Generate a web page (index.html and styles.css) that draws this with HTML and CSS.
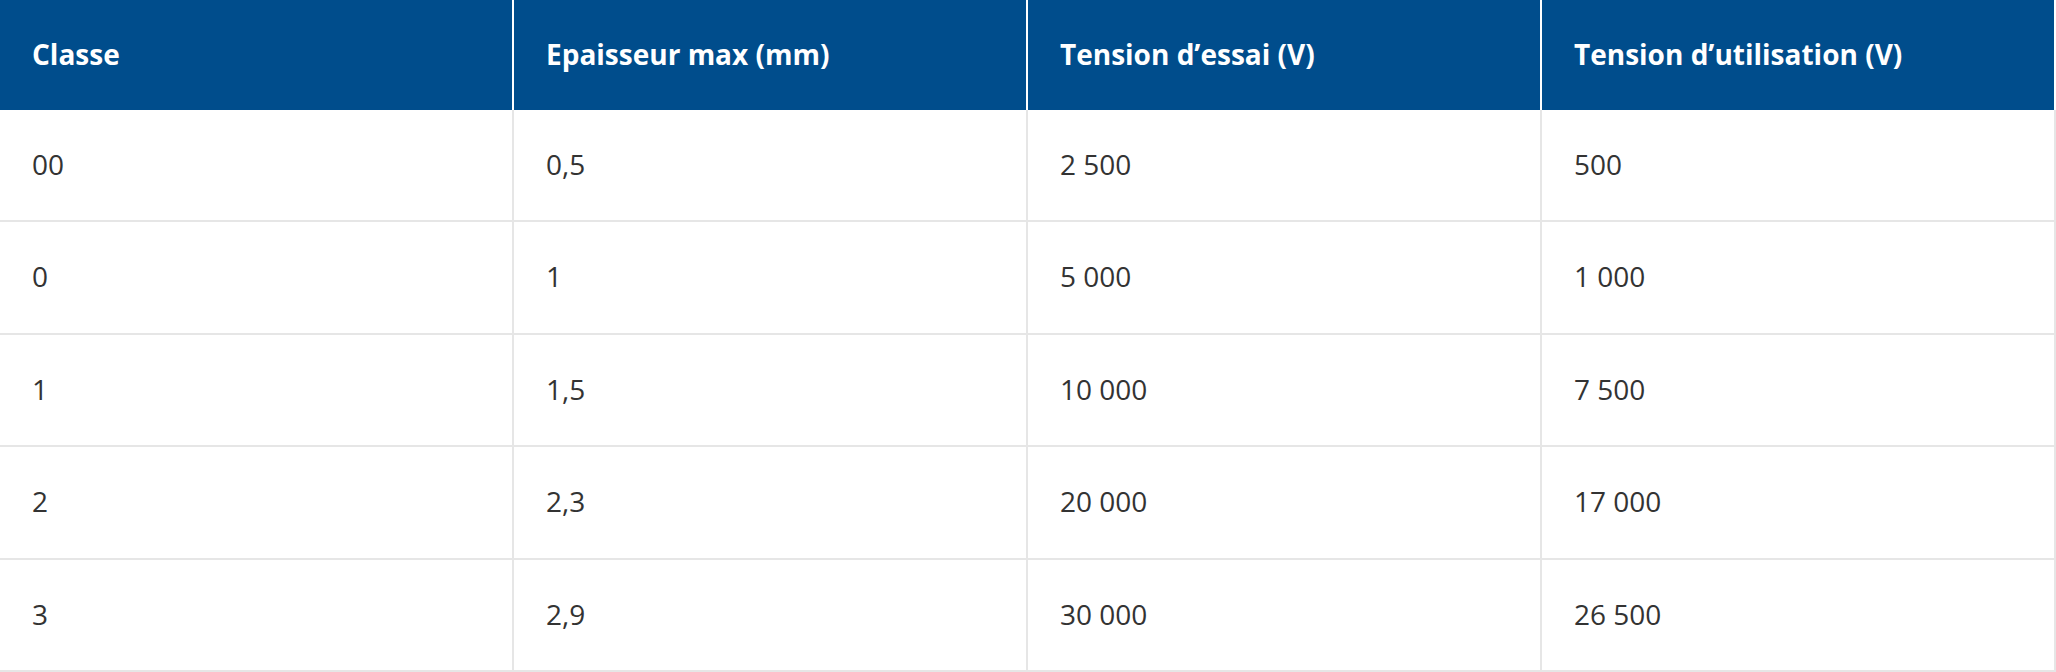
FILE: index.html
```html
<!DOCTYPE html>
<html lang="fr">
<head>
<meta charset="utf-8">
<title>Classes</title>
<link rel="stylesheet" href="styles.css">
</head>
<body>
<table class="spec-table">
  <thead>
    <tr>
      <th>Classe</th>
      <th>Epaisseur max (mm)</th>
      <th>Tension d’essai (V)</th>
      <th>Tension d’utilisation (V)</th>
    </tr>
  </thead>
  <tbody>
    <tr><td>00</td><td>0,5</td><td>2 500</td><td>500</td></tr>
    <tr><td>0</td><td>1</td><td>5 000</td><td>1 000</td></tr>
    <tr><td>1</td><td>1,5</td><td>10 000</td><td>7 500</td></tr>
    <tr><td>2</td><td>2,3</td><td>20 000</td><td>17 000</td></tr>
    <tr><td>3</td><td>2,9</td><td>30 000</td><td>26 500</td></tr>
  </tbody>
</table>
</body>
</html>
```
FILE: styles.css
```css
html, body {
  margin: 0;
  padding: 0;
  background: #ffffff;
}

body {
  font-family: "Open Sans", "Noto Sans", "Liberation Sans", sans-serif;
  color: #333333;
}

.spec-table {
  width: 2056px;
  table-layout: fixed;
  border-collapse: separate;
  border-spacing: 0;
  font-size: 28px;
}

.spec-table thead tr {
  height: 110px;
}

.spec-table tbody tr {
  height: 112.4px;
}

.spec-table th,
.spec-table td {
  text-align: left;
  vertical-align: middle;
  padding: 0 0 2px 32px;
  line-height: 1.3;
}

.spec-table th {
  background: #004d8c;
  color: #ffffff;
  font-weight: 700;
  border-right: 2px solid #ffffff;
}

.spec-table td {
  font-weight: 400;
  color: #333333;
  border-right: 2px solid #e6e6e6;
  border-bottom: 2px solid #e6e6e6;
}
```
